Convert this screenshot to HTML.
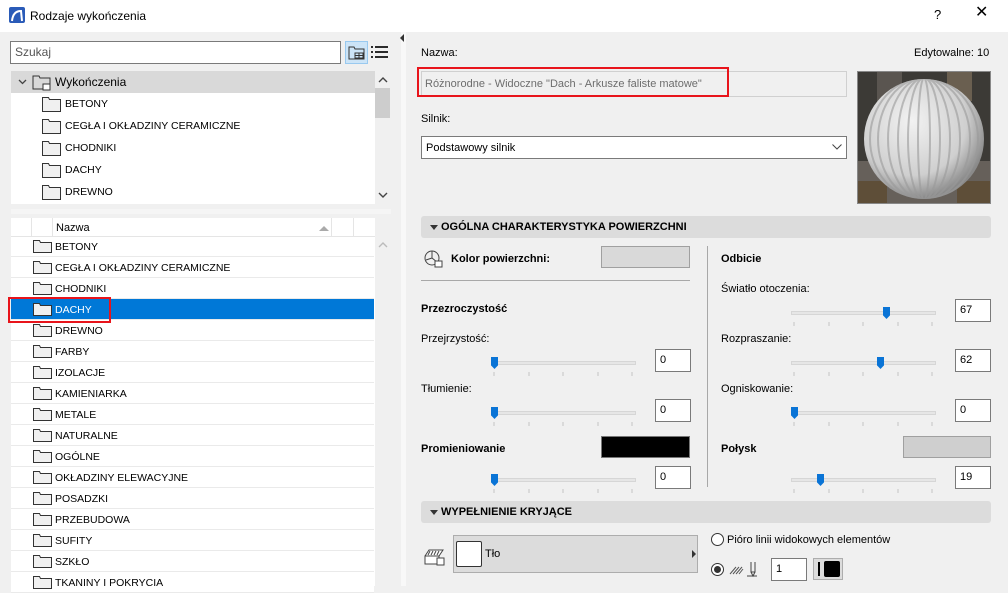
<!DOCTYPE html>
<html><head><meta charset="utf-8"><style>
*{margin:0;padding:0;box-sizing:border-box}
body{width:1008px;height:586px;overflow:hidden;background:#f0f0f0;font-family:"Segoe UI","Liberation Sans","DejaVu Sans",sans-serif;font-size:12px;color:#000;position:relative}
.a{position:absolute}
.t{position:absolute;white-space:nowrap;line-height:14px}
.b{font-weight:bold}
.row{position:absolute;left:11px;width:363px;height:21px;border-bottom:1px solid #eaeaea;background:#fff}
.row span{position:absolute;left:44px;top:4px;font-size:10.5px;line-height:14px;white-space:nowrap}
.fold{position:absolute;left:22px;top:4px;width:19px;height:13px}
.box{position:absolute;background:#fff;border:1px solid #7a7a7a;height:23px;width:36px;font-size:11px;padding:4px 0 0 4px}
.track{position:absolute;height:4px;background:#e6e6e6;border:1px solid #d6d6d6}
.thumb{position:absolute;width:7px;height:12px;background:#0a74d6;clip-path:polygon(0 0,100% 0,100% 70%,50% 100%,0 70%)}
.hdr{position:absolute;left:421px;width:570px;height:22px;background:#dcdcdc;border-radius:3px}
.hdr span{position:absolute;left:20px;top:5px;font-weight:bold;font-size:11px}
.hdr i{position:absolute;left:9px;top:9px;border-left:4px solid transparent;border-right:4px solid transparent;border-top:5px solid #333}
</style></head><body>
<div class="a" style="left:0;top:0;width:1008px;height:32px;background:#fff"></div>
<svg class="a" style="left:9px;top:7px" width="16" height="16"><rect width="16" height="16" rx="2" fill="#2a5bb8"/><path d="M3 14 Q4 4 12 4 L13 14" stroke="#fff" stroke-width="2" fill="none"/></svg>
<div class="t" style="left:30px;top:9px;font-size:12px">Rodzaje wykończenia</div>
<div class="t" style="left:934px;top:8px;font-size:13px">?</div>
<div class="t" style="left:975px;top:6px;font-size:16px">✕</div>

<div class="a" style="left:10px;top:41px;width:331px;height:23px;background:#fff;border:1px solid #7a7a7a"></div>
<div class="t" style="left:15px;top:45px;color:#555">Szukaj</div>
<div class="a" style="left:345px;top:41px;width:23px;height:23px;background:#cce4f7;border:1px solid #99c9ef"></div>
<svg class="a" style="left:348px;top:45px" width="18" height="16"><path d="M1 2h5l1 2h9v10H1z" fill="none" stroke="#333"/><rect x="7" y="8" width="8" height="5" fill="none" stroke="#333"/><path d="M7 10.5h8M11 8v5" stroke="#333"/></svg>
<svg class="a" style="left:371px;top:46px" width="17" height="12"><g fill="#2b2b2b"><rect x="0" y="0" width="2" height="2"/><rect x="4" y="0" width="13" height="2"/><rect x="0" y="5" width="2" height="2"/><rect x="4" y="5" width="13" height="2"/><rect x="0" y="10" width="2" height="2"/><rect x="4" y="10" width="13" height="2"/></g></svg>

<div class="a" style="left:11px;top:71px;width:364px;height:133px;background:#fff"></div>
<div class="a" style="left:11px;top:71px;width:364px;height:22px;background:#d9d9d9"></div>
<svg class="a" style="left:18px;top:79px" width="9" height="6"><path d="M1 1l3.5 3.5L8 1" stroke="#444" stroke-width="1.3" fill="none"/></svg>
<svg class="a" style="left:32px;top:74px" width="20" height="17"><path d="M1 2h6l1 2h10v11H1z" fill="none" stroke="#333"/><rect x="11" y="10" width="7" height="6" fill="#fff" stroke="#333"/></svg>
<div class="t" style="left:55px;top:75px">Wykończenia</div>
<div class="t" style="left:65px;top:97px;font-size:10.5px">BETONY</div>
<div class="t" style="left:65px;top:119px;font-size:10.5px">CEGŁA I OKŁADZINY CERAMICZNE</div>
<div class="t" style="left:65px;top:141px;font-size:10.5px">CHODNIKI</div>
<div class="t" style="left:65px;top:163px;font-size:10.5px">DACHY</div>
<div class="t" style="left:65px;top:185px;font-size:10.5px">DREWNO</div>
<svg class="a" style="left:42px;top:96px" width="20" height="110"><g fill="#f0f0f0" stroke="#333"><path d="M0.5 1.5h6l1 2h11v12h-18z"/><path d="M0.5 23.5h6l1 2h11v12h-18z"/><path d="M0.5 45.5h6l1 2h11v12h-18z"/><path d="M0.5 67.5h6l1 2h11v12h-18z"/><path d="M0.5 89.5h6l1 2h11v12h-18z"/></g></svg>
<div class="a" style="left:375px;top:71px;width:15px;height:133px;background:#f0f0f0"></div>
<div class="a" style="left:375px;top:88px;width:15px;height:30px;background:#cdcdcd"></div>
<svg class="a" style="left:378px;top:77px" width="10" height="6"><path d="M1 5l4-4 4 4" stroke="#444" stroke-width="1.4" fill="none"/></svg>
<svg class="a" style="left:378px;top:192px" width="10" height="6"><path d="M1 1l4 4 4-4" stroke="#444" stroke-width="1.4" fill="none"/></svg>
<div class="a" style="left:11px;top:209px;width:380px;height:5px;background:#f5f5f5"></div>

<div class="a" style="left:11px;top:218px;width:364px;height:368px;background:#fff"></div>
<div class="t" style="left:56px;top:221px;font-size:11px">Nazwa</div>
<div class="a" style="left:31px;top:218px;width:1px;height:19px;background:#e5e5e5"></div>
<div class="a" style="left:52px;top:218px;width:1px;height:19px;background:#e5e5e5"></div>
<div class="a" style="left:331px;top:218px;width:1px;height:19px;background:#e5e5e5"></div>
<div class="a" style="left:353px;top:218px;width:1px;height:19px;background:#e5e5e5"></div>
<div class="a" style="left:319px;top:226px;border-left:5px solid transparent;border-right:5px solid transparent;border-bottom:5px solid #aaa"></div>
<svg class="a" style="left:378px;top:242px" width="10" height="6"><path d="M1 5l4-4 4 4" stroke="#bbb" stroke-width="1.4" fill="none"/></svg>

<div class="row" style="top:236px"><svg class="fold"><path d="M0.5 0.5h6l1 2h11v10h-18z" fill="#f0f0f0" stroke="#333"/></svg><span>BETONY</span></div>
<div class="row" style="top:257px"><svg class="fold"><path d="M0.5 0.5h6l1 2h11v10h-18z" fill="#f0f0f0" stroke="#333"/></svg><span>CEGŁA I OKŁADZINY CERAMICZNE</span></div>
<div class="row" style="top:278px"><svg class="fold"><path d="M0.5 0.5h6l1 2h11v10h-18z" fill="#f0f0f0" stroke="#333"/></svg><span>CHODNIKI</span></div>
<div class="row" style="top:299px;background:#0078d7"><svg class="fold"><path d="M0.5 0.5h6l1 2h11v10h-18z" fill="#f0f0f0" stroke="#333"/></svg><span style="color:#fff">DACHY</span></div>
<div class="row" style="top:320px"><svg class="fold"><path d="M0.5 0.5h6l1 2h11v10h-18z" fill="#f0f0f0" stroke="#333"/></svg><span>DREWNO</span></div>
<div class="row" style="top:341px"><svg class="fold"><path d="M0.5 0.5h6l1 2h11v10h-18z" fill="#f0f0f0" stroke="#333"/></svg><span>FARBY</span></div>
<div class="row" style="top:362px"><svg class="fold"><path d="M0.5 0.5h6l1 2h11v10h-18z" fill="#f0f0f0" stroke="#333"/></svg><span>IZOLACJE</span></div>
<div class="row" style="top:383px"><svg class="fold"><path d="M0.5 0.5h6l1 2h11v10h-18z" fill="#f0f0f0" stroke="#333"/></svg><span>KAMIENIARKA</span></div>
<div class="row" style="top:404px"><svg class="fold"><path d="M0.5 0.5h6l1 2h11v10h-18z" fill="#f0f0f0" stroke="#333"/></svg><span>METALE</span></div>
<div class="row" style="top:425px"><svg class="fold"><path d="M0.5 0.5h6l1 2h11v10h-18z" fill="#f0f0f0" stroke="#333"/></svg><span>NATURALNE</span></div>
<div class="row" style="top:446px"><svg class="fold"><path d="M0.5 0.5h6l1 2h11v10h-18z" fill="#f0f0f0" stroke="#333"/></svg><span>OGÓLNE</span></div>
<div class="row" style="top:467px"><svg class="fold"><path d="M0.5 0.5h6l1 2h11v10h-18z" fill="#f0f0f0" stroke="#333"/></svg><span>OKŁADZINY ELEWACYJNE</span></div>
<div class="row" style="top:488px"><svg class="fold"><path d="M0.5 0.5h6l1 2h11v10h-18z" fill="#f0f0f0" stroke="#333"/></svg><span>POSADZKI</span></div>
<div class="row" style="top:509px"><svg class="fold"><path d="M0.5 0.5h6l1 2h11v10h-18z" fill="#f0f0f0" stroke="#333"/></svg><span>PRZEBUDOWA</span></div>
<div class="row" style="top:530px"><svg class="fold"><path d="M0.5 0.5h6l1 2h11v10h-18z" fill="#f0f0f0" stroke="#333"/></svg><span>SUFITY</span></div>
<div class="row" style="top:551px"><svg class="fold"><path d="M0.5 0.5h6l1 2h11v10h-18z" fill="#f0f0f0" stroke="#333"/></svg><span>SZKŁO</span></div>
<div class="row" style="top:572px"><svg class="fold"><path d="M0.5 0.5h6l1 2h11v10h-18z" fill="#f0f0f0" stroke="#333"/></svg><span>TKANINY I POKRYCIA</span></div>
<div class="a" style="left:11px;top:218px;width:364px;height:19px;border-bottom:1px solid #e5e5e5"></div>
<div class="a" style="left:8px;top:297px;width:103px;height:26px;border:2px solid #e8141b"></div>

<div class="a" style="left:401px;top:32px;width:5px;height:554px;background:#f8f8f8"></div>
<div class="a" style="left:400px;top:34px;border-top:4px solid transparent;border-bottom:4px solid transparent;border-right:4px solid #333"></div>

<div class="t" style="left:421px;top:46px;font-size:11px">Nazwa:</div>
<div class="t" style="left:914px;top:46px;font-size:11px">Edytowalne: 10</div>
<div class="a" style="left:421px;top:71px;width:426px;height:26px;background:#f0f0f0;border:1px solid #d0d0d0"></div>
<div class="t" style="left:425px;top:77px;font-size:11px;color:#6d6d6d">Różnorodne - Widoczne "Dach - Arkusze faliste matowe"</div>
<div class="a" style="left:417px;top:67px;width:312px;height:30px;border:2px solid #e8141b"></div>
<div class="t" style="left:421px;top:112px;font-size:11px">Silnik:</div>
<div class="a" style="left:421px;top:136px;width:426px;height:23px;background:#fff;border:1px solid #7a7a7a"></div>
<div class="t" style="left:426px;top:141px;font-size:11px">Podstawowy silnik</div>
<svg class="a" style="left:832px;top:144px" width="10" height="6"><path d="M0.5 0.5l4.5 4.5 4.5-4.5" stroke="#444" fill="none"/></svg>
<svg class="a" style="left:857px;top:71px" width="134" height="133">
<defs><radialGradient id="g" cx="40%" cy="35%" r="65%"><stop offset="0" stop-color="#f2f2f2"/><stop offset=".7" stop-color="#cfcfcf"/><stop offset="1" stop-color="#8a8a8a"/></radialGradient>
<clipPath id="c"><circle cx="67" cy="68" r="60"/></clipPath></defs>
<rect width="134" height="133" fill="#3c3a36"/>
<rect x="0" y="90" width="134" height="43" fill="#66605a"/>
<rect x="20" y="0" width="25" height="30" fill="#5a5550"/><rect x="90" y="0" width="25" height="30" fill="#6a5f50"/>
<rect x="0" y="110" width="30" height="23" fill="#5e4e38"/><rect x="100" y="110" width="34" height="23" fill="#5e4e38"/>
<circle cx="67" cy="68" r="60" fill="url(#g)"/>
<g clip-path="url(#c)" stroke="#9a9a9a" stroke-width="2" fill="none" opacity=".6">
<ellipse cx="67" cy="68" rx="6" ry="61"/><ellipse cx="67" cy="68" rx="16" ry="61"/><ellipse cx="67" cy="68" rx="26" ry="61"/><ellipse cx="67" cy="68" rx="36" ry="61"/><ellipse cx="67" cy="68" rx="46" ry="61"/><ellipse cx="67" cy="68" rx="54" ry="61"/></g>
<rect x=".5" y=".5" width="133" height="132" fill="none" stroke="#888"/></svg>

<div class="hdr" style="top:216px"><i></i><span>OGÓLNA CHARAKTERYSTYKA POWIERZCHNI</span></div>
<svg class="a" style="left:424px;top:249px" width="20" height="20"><circle cx="8" cy="9" r="7" fill="none" stroke="#444"/><path d="M8 2v7l5 4M8 9l-6 2" stroke="#444" fill="none"/><rect x="11" y="12" width="7" height="6" fill="#fff" stroke="#444"/></svg>
<div class="t b" style="left:451px;top:252px;font-size:11px">Kolor powierzchni:</div>
<div class="a" style="left:601px;top:246px;width:89px;height:22px;background:#d9d9d9;border:1px solid #a0a0a0"></div>
<div class="a" style="left:421px;top:280px;width:269px;height:1px;background:#a8a8a8"></div>
<div class="t b" style="left:421px;top:302px;font-size:11px">Przezroczystość</div>
<div class="t" style="left:421px;top:332px;font-size:11px">Przejrzystość:</div>
<div class="t" style="left:421px;top:382px;font-size:11px">Tłumienie:</div>
<div class="t b" style="left:421px;top:442px;font-size:11px">Promieniowanie</div>
<div class="a" style="left:601px;top:436px;width:89px;height:22px;background:#000;border:1px solid #777"></div>
<div class="a" style="left:707px;top:246px;width:1px;height:241px;background:#a8a8a8"></div>
<div class="t b" style="left:721px;top:252px;font-size:11px">Odbicie</div>
<div class="t" style="left:721px;top:282px;font-size:11px">Światło otoczenia:</div>
<div class="t" style="left:721px;top:332px;font-size:11px">Rozpraszanie:</div>
<div class="t" style="left:721px;top:382px;font-size:11px">Ogniskowanie:</div>
<div class="t b" style="left:721px;top:442px;font-size:11px">Połysk</div>
<div class="a" style="left:903px;top:436px;width:88px;height:22px;background:#cfcfcf;border:1px solid #a0a0a0"></div>

<div class="track" style="left:491px;top:361px;width:145px"></div><div class="thumb" style="left:491px;top:357px"></div>
<div class="track" style="left:491px;top:411px;width:145px"></div><div class="thumb" style="left:491px;top:407px"></div>
<div class="track" style="left:491px;top:478px;width:145px"></div><div class="thumb" style="left:491px;top:474px"></div>
<div class="box" style="left:655px;top:349px">0</div>
<div class="box" style="left:655px;top:399px">0</div>
<div class="box" style="left:655px;top:466px">0</div>
<div class="track" style="left:791px;top:311px;width:145px"></div><div class="thumb" style="left:883px;top:307px"></div>
<div class="track" style="left:791px;top:361px;width:145px"></div><div class="thumb" style="left:877px;top:357px"></div>
<div class="track" style="left:791px;top:411px;width:145px"></div><div class="thumb" style="left:791px;top:407px"></div>
<div class="track" style="left:791px;top:478px;width:145px"></div><div class="thumb" style="left:817px;top:474px"></div>
<div class="box" style="left:955px;top:299px">67</div>
<div class="box" style="left:955px;top:349px">62</div>
<div class="box" style="left:955px;top:399px">0</div>
<div class="box" style="left:955px;top:466px">19</div>
<svg class="a" style="left:0;top:0" width="1008" height="586"><g stroke="#c4c4c4">
<path d="M494 372v4M529 372v4M563 372v4M598 372v4M632 372v4 M494 422v4M529 422v4M563 422v4M598 422v4M632 422v4 M494 489v4M529 489v4M563 489v4M598 489v4M632 489v4 M794 322v4M829 322v4M863 322v4M898 322v4M932 322v4 M794 372v4M829 372v4M863 372v4M898 372v4M932 372v4 M794 422v4M829 422v4M863 422v4M898 422v4M932 422v4 M794 489v4M829 489v4M863 489v4M898 489v4M932 489v4"/></g></svg>

<div class="hdr" style="top:501px"><i></i><span>WYPEŁNIENIE KRYJĄCE</span></div>
<svg class="a" style="left:424px;top:546px" width="22" height="20"><path d="M1 10h14v8H1z M1 10l4-6h14l-4 6" fill="#fff" stroke="#444"/><path d="M6 5l-2 4M9 5l-2 4M12 5l-2 4M15 5l-2 4" stroke="#444"/><rect x="13" y="12" width="7" height="7" fill="#fff" stroke="#444"/></svg>
<div class="a" style="left:453px;top:535px;width:245px;height:38px;background:#dcdcdc;border:1px solid #adadad"></div>
<div class="a" style="left:456px;top:541px;width:26px;height:26px;background:#fff;border:1px solid #333;border-radius:2px"></div>
<div class="t" style="left:485px;top:547px;font-size:11px">Tło</div>
<div class="a" style="left:692px;top:550px;border-top:4px solid transparent;border-bottom:4px solid transparent;border-left:4px solid #333"></div>
<div class="a" style="left:711px;top:533px;width:13px;height:13px;border:1px solid #333;border-radius:50%;background:#fff"></div>
<div class="t" style="left:727px;top:533px;font-size:11px">Pióro linii widokowych elementów</div>
<div class="a" style="left:711px;top:563px;width:13px;height:13px;border:1px solid #333;border-radius:50%;background:#fff"></div>
<div class="a" style="left:714px;top:566px;width:7px;height:7px;border-radius:50%;background:#333"></div>
<svg class="a" style="left:729px;top:560px" width="30" height="18"><path d="M1 14l6-7M4 14l6-7M7 14l6-7M10 14l4-5" stroke="#555"/><path d="M22 2v10h4V2M22 12l2 4 2-4M18 16h10" stroke="#444" fill="none"/></svg>
<div class="box" style="left:771px;top:558px;height:23px">1</div>
<div class="a" style="left:813px;top:558px;width:30px;height:22px;background:#dcdcdc;border:1px solid #adadad"></div>
<div class="a" style="left:818px;top:562px;width:2px;height:14px;background:#000"></div>
<div class="a" style="left:824px;top:561px;width:16px;height:16px;background:#000;border-radius:2px"></div>
</body></html>
